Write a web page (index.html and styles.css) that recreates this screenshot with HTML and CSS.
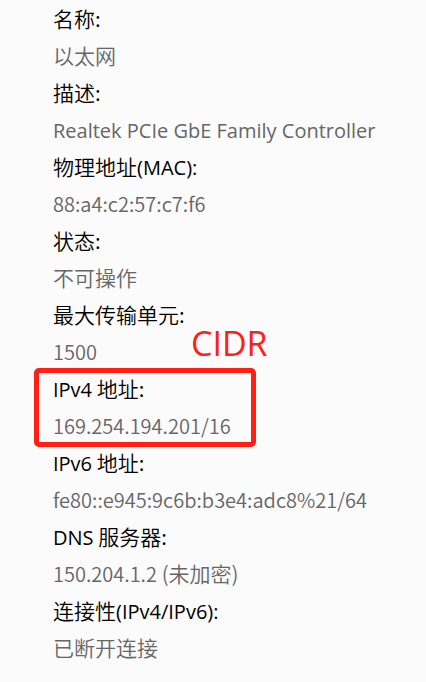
FILE: index.html
```
<!DOCTYPE html>
<html lang="zh-CN">
<head>
<meta charset="utf-8">
<meta name="viewport" content="width=device-width, initial-scale=1">
<title>以太网</title>
<link rel="stylesheet" href="styles.css">
</head>
<body>
<main>
<dl class="properties">
<div class="property"><dt>名称:</dt><dd>以太网</dd></div>
<div class="property"><dt>描述:</dt><dd><span class="latin">Realtek PCIe GbE Family Controller</span></dd></div>
<div class="property"><dt>物理地址<span class="latin">(MAC):</span></dt><dd><span class="numeric">88:a4:c2:57:c7:f6</span></dd></div>
<div class="property"><dt>状态:</dt><dd>不可操作</dd></div>
<div class="property"><dt>最大传输单元:</dt><dd><span class="numeric">1500</span></dd></div>
<div class="property marked"><dt><span class="latin">IPv4</span> 地址:</dt><dd><span class="numeric">169.254.194.201/16</span></dd><div class="note">CIDR</div></div>
<div class="property"><dt><span class="latin">IPv6</span> 地址:</dt><dd><span class="numeric">fe80::e945:9c6b:b3e4:adc8%21/64</span></dd></div>
<div class="property"><dt><span class="latin">DNS</span> 服务器:</dt><dd><span class="numeric">150.204.1.2</span> (未加密)</dd></div>
<div class="property"><dt>连接性<span class="latin">(IPv4/IPv6):</span></dt><dd>已断开连接</dd></div>
</dl>
</main>
</body>
</html>
```
FILE: styles.css
```
body {
  margin: 0;
  background: #fbfbfb;
  color: #000;
  font-family: "Noto Sans CJK SC", sans-serif;
  font-size: 21px;
  font-weight: 350;
  line-height: 37px;
}

.properties {
  margin: 0;
  padding: 0 12px 15px 53px;
}

.property {
  position: relative;
}

dt,
dd {
  margin: 0;
  white-space: nowrap;
}

dd {
  color: #666;
}

.latin,
.numeric {
  font-size: 20px;
  line-height: 1;
}

.latin {
  font-family: "Open Sans", sans-serif;
  font-weight: 400;
}

.marked::before {
  content: "";
  position: absolute;
  top: -2px;
  left: -19px;
  width: 212px;
  height: 69px;
  border: 5px solid #ff2015;
  border-radius: 5px;
}

.note {
  position: absolute;
  top: -47px;
  left: 138px;
  color: #ff2015;
  font-family: "Open Sans", sans-serif;
  font-size: 34px;
  font-weight: 400;
  line-height: 40px;
}
```
